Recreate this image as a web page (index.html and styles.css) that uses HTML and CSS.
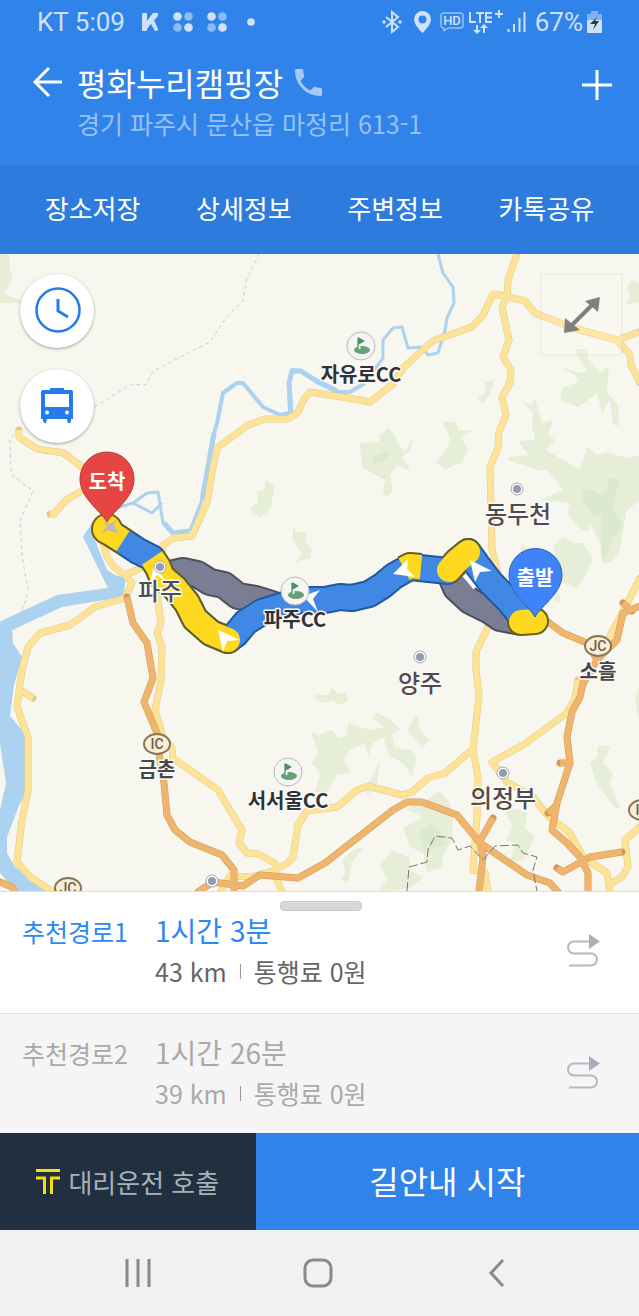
FILE: index.html
```html
<!DOCTYPE html>
<html lang="ko">
<head>
<meta charset="utf-8">
<meta name="viewport" content="width=device-width, initial-scale=1">
<title>평화누리캠핑장 길찾기</title>
<link rel="stylesheet" href="styles.css">
</head>
<body>
<div class="status">
  <span class="status-text">KT 5:09</span>
  <svg class="ic-k" width="18" height="20" viewBox="0 0 18 20"><rect x="1" y="1" width="5" height="18" rx="1"/><path d="M12 1h5v3L9 13l-3 4V9zM9 10l4-2 4 9q0 2-3 2z"/></svg>
  <svg class="ic-dots" width="20" height="20" viewBox="0 0 20 20"><circle cx="4.500" cy="4.500" r="4.300"/><circle class="dim" cx="15.500" cy="4.500" r="4.300"/><circle class="dim" cx="4.500" cy="15.500" r="4.300"/><circle cx="15.500" cy="15.500" r="4.300"/></svg>
  <svg class="ic-dots" width="20" height="20" viewBox="0 0 20 20"><circle cx="4.500" cy="4.500" r="4.300"/><circle class="dim" cx="15.500" cy="4.500" r="4.300"/><circle class="dim" cx="4.500" cy="15.500" r="4.300"/><circle cx="15.500" cy="15.500" r="4.300"/></svg>
  <svg class="ic-more" width="8" height="8" viewBox="0 0 8 8"><circle cx="4" cy="4" r="3.800"/></svg>
  <div class="status-right">
    <svg width="20" height="24" viewBox="0 0 20 24"><path class="line" d="M4 7l12 10-6 5V2l6 5L4 17"/><circle cx="2" cy="12" r="1.700"/><circle cx="18" cy="12" r="1.700"/></svg>
    <svg class="gap-pin" width="17" height="22" viewBox="0 0 17 22"><path fill-rule="evenodd" d="M8.500 0A8.500 8.500 0 0 0 0 8.500C0 14 8.500 22 8.500 22S17 14 17 8.500A8.500 8.500 0 0 0 8.500 0zm0 4.500a4 4 0 1 1 0 8 4 4 0 0 1 0-8z"/></svg>
    <svg class="gap-hd" width="24" height="20" viewBox="0 0 24 20"><path class="thin" d="M3 1h18q2 0 2 2v11q0 2-2 2h-13l-4 3v-3H3q-2 0-2-2V3q0-2 2-2z"/><text x="12" y="13" font-size="13" font-weight="500" text-anchor="middle">HD</text></svg>
    <svg width="35" height="26" viewBox="0 0 35 26"><path class="line" d="M2 3v10h6M8 4h8M12 4v10M24 4h-6v9h6M18 8.500h6M27 5h8M31 1v8M9 16v7M16 24v-7"/><path d="M5 21h8l-4 4zM12 19h8l-4-4z"/></svg>
    <svg class="gap-sig" width="19" height="22" viewBox="0 0 19 22"><path class="line" d="M1.500 18v3M7 13v8M12.500 7v14M17.500 1v20"/></svg>
    <span class="status-text">67%</span>
    <svg width="15" height="22" viewBox="0 0 15 22"><path opacity=".5" d="M4 0h7v3h4v7H0V3h4z"/><path d="M0 9h15v12q0 1-1 1H1q-1 0-1-1z"/><path class="bolt" d="M10 6 3 13h5l-2 6 6-9H8z"/></svg>
  </div>
</div>

<header class="header">
  <button class="icon-btn" aria-label="뒤로"><svg width="32" height="32" viewBox="0 0 32 32"><path d="M17 2 3 16l14 14M3 16h27"/></svg></button>
  <div class="place">
    <h1 class="place-name">평화누리캠핑장
      <button class="icon-btn" aria-label="전화"><svg class="phone" width="27" height="27" viewBox="3 3 18 18"><path d="M6.620 10.790c1.440 2.830 3.760 5.140 6.590 6.590l2.200-2.200c.270-.270.670-.360 1.020-.240 1.120.370 2.330.570 3.570.570.550 0 1 .450 1 1V20c0 .550-.450 1-1 1-9.390 0-17-7.610-17-17 0-.550.450-1 1-1h3.500c.550 0 1 .450 1 1 0 1.250.200 2.450.570 3.570.110.350.030.740-.250 1.020z"/></svg></button>
    </h1>
    <p class="place-addr">경기 파주시 문산읍 마정리 613-1</p>
  </div>
  <button class="icon-btn add" aria-label="추가"><svg width="32" height="32" viewBox="0 0 32 32"><path d="M16 1v30M1 16h30"/></svg></button>
</header>

<nav class="tabs">
  <button>장소저장</button>
  <button>상세정보</button>
  <button>주변정보</button>
  <button>카톡공유</button>
</nav>

<main class="map">
<svg class="map-canvas" viewBox="0 254 639 637" preserveAspectRatio="xMidYMid slice" role="img" aria-label="경로 지도">
  <defs>
    <g id="golf"><circle r="14" fill="#f5f5f4" stroke="#b9b9bb"/><ellipse cx="1" cy="4" rx="8" ry="4" fill="#68a078"/><path d="M-2-8v11" stroke="#f5f5f4" stroke-width="3"/><path d="M-3-8v12" stroke="#68a078" stroke-width="1.500"/><path d="M-3-9 4-5-3-1z" fill="#4d9163"/></g>
    <g id="town"><circle r="6" fill="#fdfdfd" stroke="#a5a9b2"/><circle r="4" fill="#929cac"/></g>
    <path id="badge" d="M-13 0a13 10 0 1 0 26 0a13 10 0 1 0-26 0"/>
    <path id="r-a" d="M106 530 112 534 123 541"/>
    <path id="r-c" d="M152 558 158 567 162 577 175 588 187 603 195 619 211 633 228 640"/>
    <path id="r-e" d="M404 569 410 566 421 567"/>
    <path id="r-g" d="M449 570 457 561 468 552"/>
    <path id="r-i" d="M521 622 535 621"/>
    <path id="r-all" d="M106 530 123 541 138 551 152 558 158 567 162 577 175 588 187 603 195 619 211 633 228 640 236 634 246 622 262 612 275 608 300 600 325 600 340 597 352 598 369 594 382 586 394 576 410 567 429 569 448 571 457 561 468 552 478 566 491 583 508 600 521 616 535 621"/>
  </defs>
  <g class="forest">
    <path d="M0 254H9L10 270 13 277 8 287 4 294 21 300V303H1L0 300z"/>
    <path d="M387 427 393 432 398 443 405 452 414 435 410 450 401 458 410 467 406 470 397 465 390 476 393 490 387 497 383 493 385 480 363 468 360 450 360 443 368 442 380 443 379 435 385 432z"/>
    <path d="M265 479 275 487 270 510 260 517 250 510 252 506 258 503 257 492 265 490z"/>
    <path d="M293 527 298 533 307 532 305 540 312 550 310 558 295 562 302 553 293 540z"/>
    <path d="M574 349H587L588 358 600 373 609 365 607 393 617 403 620 425H613L610 400 602 413 597 393 578 407 560 400 562 388 578 382 575 375 562 367 580 373 587 372z"/>
    <path d="M495 378 490 393 483 404 478 398 485 393V383z"/>
    <path d="M442 422 457 422 458 430 472 430 462 438 468 450 462 463 445 469 436 463 448 447 450 437z"/>
    <path d="M522 402 532 405 535 398 539 413 542 423 553 420 548 435 555 440 545 450 563 460 580 470 587 447 597 455 607 452 627 458 639 455V500L626 512 620 550 610 563 602 563 600 543 590 523 588 532 578 527 567 513 570 503 540 500 555 493 563 490 548 470 537 470 509 460V457L528 455 518 441 535 440 532 425 533 413z"/>
    <path d="M563 537 573 543 583 543 593 557 587 573 577 588 562 583 553 547z"/>
    <path d="M627 287 632 280 639 283V303L625 305 630 297zM522 544 528 550 526 558 520 556zM556 588 562 602 554 600zM436 460 458 460 447 468z"/>
    <path d="M316 695 328 695 332 688 338 693 345 693 348 701 340 705 332 700 323 703 316 699z"/>
    <path d="M311 732 318 735 333 730 338 738 347 735 348 723 370 730 385 727 372 718 377 713 388 718 401 730 392 735 395 747 410 750 417 758 412 777 403 763 390 757 383 737 373 743 368 757 365 743 350 750 343 760 352 773 337 775 327 793 315 792 320 773 312 763 318 752z"/>
    <path d="M417 715 420 730 429 740 423 748 407 730zM380 762 377 783 368 795 364 788 372 777z"/>
    <path d="M363 847 352 863 348 882 342 880 345 872 342 860 353 850zM392 850 410 858V870L423 877 410 888 390 891 377 890 387 880 380 865z"/>
    <path d="M427 800 440 790 450 803 453 820 452 840 442 857 443 867 427 872 423 853 410 847 403 828 422 817 407 810z"/>
    <path d="M515 808 527 813 525 828 535 837 523 860 510 862 515 843 505 840 513 827 505 813z"/>
    <path d="M598 745 610 747 603 763 613 773 610 783 620 808H615L597 785 590 762 597 758zM639 685 635 700 639 720z"/>
  </g>
  <g class="forest-deep">
    <path d="M373 457 392 449 383 463 373 463z"/>
    <path d="M582 492 590 489 600 494 605 492 610 477 620 480 615 497 612 508 623 527 613 537 603 563 601 540 602 513 593 517 583 500z"/>
    <path d="M418 832 430 823 440 830 445 845 425 850z"/>
  </g>
  <g class="water">
    <path d="M97 515 92 533 107 570 115 575 126 578 123 597 62 607 23 625 12 630 13 643 22 657 14 685 10 716 26 735 28 767 26 795 20 803 7 837 7 853 15 867 37 883 50 892H17L0 873V810L6 783 0 743V622L3 620 57 595 108 588 88 547 83 537z"/>
  </g>
  <g class="stream">
    <path stroke-width="4" d="M209 465 214 433 217 423 223 393 237 383 243 383 263 407 280 415 290 413 289 383 292 370 300 371 317 382 337 392 350 392 365 383"/>
    <path stroke-width="3" d="M365 383 383 358 383 340 393 328 402 327 408 348 422 347 428 355 438 353 445 330 447 318 454 303 453 287 443 273 438 254"/>
    <path stroke-width="5" d="M291 412 289 383 292 371 301 371 317 381 337 391M214 433 202 500"/>
    <path stroke-width="3" d="M207 480 202 500 190 530 173 533 163 523 158 492 147 493 133 503 110 510M133 503 152 513 162 503"/>
    <path stroke-width="5" d="M189 531 173 533 164 523"/>
  </g>
  <g class="border-line">
    <path d="M94 407 132 384 146 385 153 371 210 342 228 315 243 301 246 281 259 254M18 428 10 440 11 474 33 491 20 520 22 556 28 590 26 600 10 640 5 665 0 690"/>
  </g>
  <g class="road-edge">
    <path id="y-roads" d="M19 430V437L37 449 64 453 82 467 100 480M85 489 66 500 54 514 50 514M639 332 617 340 573 328 535 313 525 301 508 297 493 294 483 315 472 327 435 340 428 345 403 368 392 385 370 402 348 398 310 392 304 399 298 412 288 419 265 419 248 425 217 448 213 467 207 503 192 536 173 538 163 545 159 570 158 603 161 623 157 633 162 647 161 680 155 710 163 737 172 748 173 758 218 790 222 797 242 830 239 843 247 853 258 854 275 863 276 877 282 892M617 340 630 355 631 365 640 383M517 254 508 280 507 297 502 307 509 340 503 357 511 370 510 383 502 397 506 415 499 432 498 448 490 467 492 550 498 573 488 627 476 652 476 670 479 695 473 750 478 777 477 817 473 870 485 872 488 892M473 749 445 773 428 778 412 792 402 795 368 786 357 790 337 807 307 811 298 825 293 857 288 863 275 870 252 877 230 876 220 892M578 680 575 698 567 713 523 745 492 762 507 782 533 797 547 815 570 833 583 857 607 873 610 892M610 884 622 877 628 867 625 840 640 827M640 578 617 623 597 660 580 690M103 542 107 557 115 568 125 575 132 583 125 598 95 607 70 625 40 633 28 647 22 670 17 707 28 737V790L22 820 17 862 30 877 53 892M20 690 33 698M125 575 143 567"/>
  </g>
  <use href="#y-roads" class="road-yellow"/>
  <g class="road-edge orange">
    <path id="o-roads" d="M127 597 133 623 147 643 153 678 144 702 157 733 160 760 164 783 167 815 175 830 190 842 222 855 234 870V892M198 892 213 882 243 886 260 875 298 878 325 863 393 810 407 802 422 802 457 815 480 843 527 875 550 883 558 892M493 818 480 841 483 857 479 892M548 622 563 633 587 643 597 660 617 640 623 613 640 606M623 603 632 611M597 660 583 683 580 697 572 712 567 737 570 763 557 803 552 830 567 843 580 857 588 873V892M560 763H569M548 813 556 806M557 868 563 872 590 857 622 852M0 882 12 887 16 893"/>
  </g>
  <use href="#o-roads" class="road-orange"/>
  <path class="city-line" d="M407 891 409 867 427 862 428 850 435 836 452 838 458 850 470 846 483 860 495 846 518 845 523 853 537 857 533 870 537 891"/>

  <g class="route">
    <path class="alt-edge" d="M170 574 183 571 197 574 210 582 224 585 238 596 256 599 275 605M450 574 456 588 470 601 490 611 500 618 521 622"/>
    <path class="alt" d="M170 574 183 571 197 574 210 582 224 585 238 596 256 599 275 605M450 574 456 588 470 601 490 611 500 618 521 622"/>
    <path d="M464 575 475 588" stroke="#fff" stroke-width="4"/>
    <use href="#r-all" class="main-edge"/>
    <use href="#r-a" class="slow-edge cap"/><use href="#r-c" class="slow-edge"/><use href="#r-e" class="slow-edge"/><use href="#r-g" class="slow-edge cap"/><use href="#r-i" class="slow-edge cap"/>
    <circle cx="107" cy="529" r="16" fill="#6c5e17"/><circle cx="228" cy="640" r="14" fill="#6c5e17"/>
    <use href="#r-all" class="main"/>
    <use href="#r-a" class="slow"/><use href="#r-c" class="slow"/><use href="#r-e" class="slow"/><use href="#r-g" class="slow cap"/><use href="#r-i" class="slow cap"/>
    <circle cx="107" cy="529" r="14" fill="#ffd920"/><circle cx="228" cy="640" r="12" fill="#ffd920"/>
    <path fill="#bdb9b4" d="M117 520 114 526 119 534 108 530 101 534 107 526 102 521 110 524z"/>
    <path fill="#fff" d="M218 630 240 640 227 641 223 652zM320 590 303 596 318 612 313 599zM408 559 393 574 415 577 407 569zM470 560 492 571 480 572 475 582zM154 566 150 582 157 575 166 581z"/>
  </g>

  <use href="#town" x="160" y="567"/><use href="#town" x="517" y="489"/><use href="#town" x="420" y="657"/><use href="#town" x="503" y="773"/><use href="#town" x="212" y="881"/>
  <use href="#golf" x="361" y="346"/><use href="#golf" x="295" y="591"/><use href="#golf" x="288" y="772"/>
  <g class="badges">
    <use href="#badge" x="157" y="744"/><use href="#badge" x="598" y="646"/><use href="#badge" x="68" y="888"/><use href="#badge" x="642" y="810"/>
    <text x="157" y="749">IC</text><text x="598" y="651">JC</text><text x="68" y="893">JC</text><text x="642" y="815">IC</text>
  </g>
  <g class="label-city">
    <text x="160" y="600">파주</text><text x="518" y="523">동두천</text><text x="420" y="692">양주</text><text x="503" y="807">의정부</text>
  </g>
  <g class="label-poi">
    <text x="361" y="382">자유로CC</text><text x="295" y="627">파주CC</text><text x="288" y="808">서서울CC</text>
    <text class="junction" x="157" y="777">금촌</text><text class="junction" x="598" y="679">소흘</text>
  </g>
  <g class="pin">
    <path fill="#e64542" stroke="#b23a39" d="M107 522C100 510 80 498 80 479A27 27 0 0 1 134 479C134 498 114 510 107 522z"/>
    <path fill="#3f83f8" stroke="#2f62b8" d="M535 617C528 605 509 593 509 575A26.500 26.500 0 0 1 562 575C562 593 542 605 535 617z"/>
    <text x="107" y="489">도착</text><text x="535" y="585">출발</text>
  </g>
</svg>
<div class="map-tools">
  <button aria-label="시간"><svg width="48" height="48" viewBox="0 0 48 48"><circle cx="25" cy="23" r="21.500" fill="none" stroke="#257bea" stroke-width="2.500"/><path d="M25 12v12l10 6" fill="none" stroke="#257bea" stroke-width="3"/></svg></button>
  <button aria-label="버스"><svg width="36" height="38" viewBox="0 0 36 38"><path fill="#257bea" fill-rule="evenodd" d="M11 1h14v2h7q2 0 2 2v27h-2v2l-1 2h-2l-1-4H8l-1 4H5l-1-2v-2H2V5q0-2 2-2h7zM6 7v13h24V7zm2 16.500a2 2 0 1 0 0 4 2 2 0 0 0 0-4zm20 0a2 2 0 1 0 0 4 2 2 0 0 0 0-4z"/></svg></button>
</div>
<button class="map-expand" aria-label="지도 확대"><svg width="38" height="38" viewBox="0 0 38 38"><path d="M9 29 29 9" stroke="#808080" stroke-width="4"/><path fill="#808080" d="M37 1 22 5l13 11zM1 37 2 22l15 12z"/></svg></button>
</main>

<section class="routes">
  <button class="route-row selected">
    <span class="route-name">추천경로1</span>
    <span class="route-info"><span class="route-time">1시간 3분</span><span class="route-meta"><span>43 km</span><i></i><span>통행료 0원</span></span></span>
    <svg width="34" height="33" viewBox="0 0 34 33"><path class="snake" d="M23 7.500H8a6 6 0 0 0 0 12h17a6 6 0 0 1 0 12H3"/><path class="tip" d="M23 0l11 7.500L23 15z"/></svg>
  </button>
  <button class="route-row">
    <span class="route-name">추천경로2</span>
    <span class="route-info"><span class="route-time">1시간 26분</span><span class="route-meta"><span>39 km</span><i></i><span>통행료 0원</span></span></span>
    <svg width="34" height="33" viewBox="0 0 34 33"><path class="snake" d="M23 7.500H8a6 6 0 0 0 0 12h17a6 6 0 0 1 0 12H3"/><path class="tip" d="M23 0l11 7.500L23 15z"/></svg>
  </button>
</section>

<div class="actions">
  <button class="call"><svg width="24" height="26" viewBox="0 0 24 26"><path d="M0 1.500h24M0 9h8.500v16M24 9h-8.500v16"/></svg>대리운전 호출</button>
  <button class="start">길안내 시작</button>
</div>

<nav class="sysnav">
  <button aria-label="최근 앱"><svg width="30" height="28" viewBox="0 0 30 28"><path d="M3 0v28M14 0v28M25 0v28"/></svg></button>
  <button aria-label="홈"><svg width="30" height="30" viewBox="0 0 30 30"><rect x="2" y="2" width="26" height="26" rx="8"/></svg></button>
  <button aria-label="뒤로"><svg width="18" height="28" viewBox="0 0 18 28"><path d="M15 1 3 14l12 13"/></svg></button>
</nav>
</body>
</html>
```
FILE: styles.css
```css
* { box-sizing: border-box; }
body {
  margin: 0;
  min-height: 100vh;
  display: flex;
  flex-direction: column;
  background: #f1f1f1;
  font-family: "Noto Sans CJK KR", "Noto Sans", sans-serif;
}
button {
  margin: 0;
  padding: 0;
  border: 0;
  background: none;
  font: inherit;
  color: inherit;
  cursor: pointer;
}
svg { display: block; flex: none; }

.status {
  display: flex;
  align-items: center;
  height: 44px;
  padding: 0 37px;
  background: #3083e9;
  color: #cfe1fb;
}
.status svg { fill: #cfe1fb; }
.status .line { fill: none; stroke: #cfe1fb; stroke-width: 2; }
.status .thin { fill: none; stroke: #cfe1fb; stroke-width: 1; }
.status .dim { opacity: .6; }
.status .bolt { fill: #26374d; }
.status text { font-family: Roboto, sans-serif; }
.status-text { font: 26px/30px Roboto, sans-serif; }
.ic-k { margin-left: 16px; }
.ic-dots { margin-left: 14px; }
.ic-more { margin-left: 20px; }
.status-right { display: flex; align-items: center; gap: 4px; margin-left: auto; }
.gap-pin { margin-left: 8px; }
.gap-hd { margin-left: 5px; }
.status-right .status-text { margin-left: 5px; }

.header {
  display: flex;
  gap: 13px;
  padding: 18px 26px 25px 32px;
  background: #3083e9;
  color: #fff;
}
.icon-btn svg { fill: none; stroke: #fff; stroke-width: 3; }
.header > .icon-btn { height: 40px; }
.header > .add { height: 46px; }
.place { flex: 1; }
.place-name {
  display: flex;
  align-items: center;
  gap: 12px;
  margin: 0;
  font-size: 32px;
  font-weight: 400;
  line-height: 40px;
}
.icon-btn .phone { fill: #a6c9f7; stroke: none; }
.place-addr { margin: 4px 0 0; font-size: 25px; line-height: 34px; color: #98c1f5; }

.tabs { display: flex; padding: 0 17px; background: #2d7bdc; color: #fff; }
.tabs button { flex: 1; font-size: 26px; line-height: 37px; padding: 24px 0 28px; }

.map { position: relative; flex: 1; min-height: 400px; background: #f7f7ef; border-bottom: 1px solid #dfdfdf; }
.map-canvas { position: absolute; inset: 0; width: 100%; height: 100%; }
.forest { fill: #e6eed8; }
.forest-deep { fill: #dbe9ce; }
.water { fill: #abd2f0; }
.stream { fill: none; stroke: #abd2f0; stroke-linejoin: round; }
.border-line { fill: none; stroke: #cfcfcb; stroke-dasharray: 4 3; }
.city-line { fill: none; stroke: #77776f; stroke-dasharray: 9 3; }
.road-edge { fill: none; stroke: #e3cb85; stroke-width: 7; stroke-linejoin: round; stroke-linecap: round; }
.road-edge.orange { stroke: #cf9a59; }
.road-yellow { fill: none; stroke: #fde398; stroke-width: 6; }
.road-orange { fill: none; stroke: #efb56d; stroke-width: 6; }
.route { fill: none; stroke-linejoin: round; }
.alt-edge { stroke: #4e505c; stroke-width: 28; }
.alt { stroke: #7b7d95; stroke-width: 24; }
.main-edge { stroke: #1d5a9f; stroke-width: 28; }
.main { stroke: #4188e5; stroke-width: 24; }
.slow-edge { stroke: #6c5e17; stroke-width: 28; }
.slow { stroke: #ffd920; stroke-width: 24; }
.cap { stroke-linecap: round; }
.badges { fill: #f9eed5; stroke: #85765a; stroke-width: 2; text-anchor: middle; }
.badges text { fill: #6b604f; stroke: none; font: 500 14px Roboto, sans-serif; }
.label-city, .label-poi { text-anchor: middle; paint-order: stroke; stroke: #fafaf6; stroke-width: 3px; stroke-linejoin: round; }
.label-city { font-size: 24px; font-weight: 500; fill: #514b50; }
.label-poi { font-size: 20px; font-weight: 700; fill: #303036; }
.label-poi .junction { fill: #48464a; }
.pin text { font-size: 20px; font-weight: 700; text-anchor: middle; fill: #fff; }

.map-tools { position: absolute; left: 20px; top: 20px; display: flex; flex-direction: column; gap: 21px; }
.map-tools button {
  display: grid;
  place-items: center;
  width: 74px;
  height: 74px;
  border-radius: 50%;
  background: #fff;
  box-shadow: 0 1px 3px rgba(0, 0, 0, .35);
}
.map-expand {
  position: absolute;
  top: 19px;
  right: 16px;
  display: grid;
  place-items: center;
  width: 83px;
  height: 83px;
  border: 2px solid rgba(0, 0, 0, .03);
  background: rgba(255, 255, 255, .15);
}

.routes { position: relative; display: flex; flex-direction: column; background: #f5f5f5; }
.routes::before {
  content: "";
  position: absolute;
  top: 9px;
  left: 50%;
  width: 80px;
  height: 8px;
  margin-left: -40px;
  border: 1px solid #c9c9c9;
  border-radius: 4px;
  background: #d8d8d8;
}
.route-row {
  display: flex;
  align-items: center;
  padding: 17px 39px 20px 22px;
  color: #a9a9a9;
  text-align: left;
}
.route-row.selected { padding-bottom: 22px; background: #fff; border-bottom: 1px solid #e0e0e0; color: #666; }
.route-name { align-self: flex-start; width: 133px; font-size: 25px; line-height: 44px; }
.route-info { flex: 1; display: flex; flex-direction: column; }
.route-time { font-size: 28px; line-height: 42px; }
.selected .route-name, .selected .route-time { color: #2a89f6; }
.route-meta { display: flex; align-items: center; gap: 13px; font-size: 25px; line-height: 40px; }
.route-meta i { width: 1px; height: 15px; background: #999; }
.snake { fill: none; stroke: #b4b9c3; stroke-width: 2; }
.tip { fill: #a8afba; }

.actions { display: flex; }
.actions button { height: 97px; display: flex; align-items: center; justify-content: center; color: #fff; }
.actions .call { flex: 0 0 40%; gap: 8px; background: #213041; color: #a9b0b8; font-size: 26px; }
.call svg { fill: none; stroke: #f6df0c; stroke-width: 3; }
.actions .start { flex: 1; padding-bottom: 4px; background: #3083e9; font-size: 32px; }

.sysnav { display: flex; height: 86px; padding: 0 53px 0 49px; background: #f1f1f1; }
.sysnav button { flex: 1; display: grid; place-items: center; }
.sysnav svg { fill: none; stroke: #8a8a8a; stroke-width: 3; }
```
